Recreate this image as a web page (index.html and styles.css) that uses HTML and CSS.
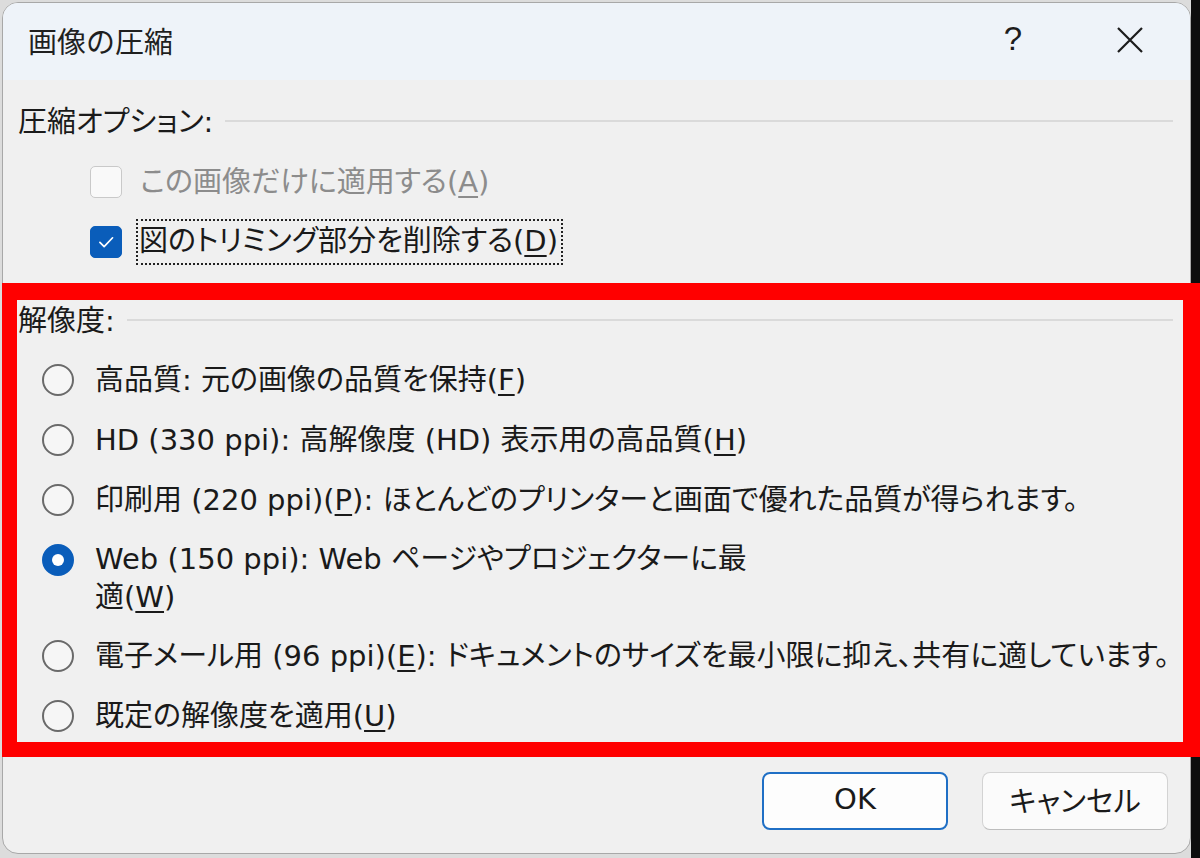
FILE: index.html
```html
<!DOCTYPE html>
<html lang="ja">
<head>
<meta charset="utf-8">
<title>画像の圧縮</title>
<link rel="stylesheet" href="styles.css">
</head>
<body>
<div class="window">
  <div class="titlebar">
    <div class="title">画像の圧縮</div>
    <div class="title-actions">
      <span class="help">?</span>
      <svg class="close" width="28" height="28" viewBox="0 0 28 28"><path d="M2 2 L26 26 M26 2 L2 26" stroke="#1c1c1c" stroke-width="2.2" fill="none"/></svg>
    </div>
  </div>
  <div class="content">
    <div class="group-head"><span>圧縮オプション:</span><i class="rule"></i></div>
    <div class="checks">
      <div class="check-row disabled">
        <span class="box"></span>
        <span class="label">この画像だけに適用する(<u>A</u>)</span>
      </div>
      <div class="check-row">
        <span class="box checked"><svg width="32" height="32" viewBox="0 0 32 32"><path d="M9.5 16.5 L14 21 L23 11.5" stroke="#fff" stroke-width="1.8" fill="none" stroke-linecap="round" stroke-linejoin="round"/></svg></span>
        <span class="label focus">図のトリミング部分を削除する(<u>D</u>)</span>
      </div>
    </div>
    <div class="group-head res-head"><span>解像度:</span><i class="rule"></i></div>
    <div class="radios">
      <div class="radio-row"><span class="radio"></span><span class="label">高品質: 元の画像の品質を保持(<u>F</u>)</span></div>
      <div class="radio-row"><span class="radio"></span><span class="label">HD (330 ppi): 高解像度 (HD) 表示用の高品質(<u>H</u>)</span></div>
      <div class="radio-row"><span class="radio"></span><span class="label">印刷用 (220 ppi)(<u>P</u>): ほとんどのプリンターと画面で優れた品質が得られます。</span></div>
      <div class="radio-row two-line"><span class="radio on"></span><span class="label">Web (150 ppi): Web ページやプロジェクターに最<br>適(<u>W</u>)</span></div>
      <div class="radio-row"><span class="radio"></span><span class="label">電子メール用 (96 ppi)(<u>E</u>): ドキュメントのサイズを最小限に抑え、共有に適しています。</span></div>
      <div class="radio-row"><span class="radio"></span><span class="label">既定の解像度を適用(<u>U</u>)</span></div>
    </div>
    <div class="buttons">
      <button class="btn primary">OK</button>
      <button class="btn">キャンセル</button>
    </div>
  </div>
</div>
<div class="highlight"></div>
</body>
</html>
```
FILE: styles.css
```css
html, body {
  margin: 0;
  padding: 0;
}
body {
  width: 1200px;
  height: 858px;
  overflow: hidden;
  position: relative;
  background: linear-gradient(to right, #dcdcdc 0, #dcdcdc 1191px, #0d0d0d 1191px);
  font-family: "DejaVu Sans", "Noto Sans CJK JP", sans-serif;
  color: #1a1a1a;
}
.window {
  margin: 2px 0 0 2px;
  width: 1187px;
  height: 850px;
  border: 1px solid #a8a8a8;
  border-radius: 16px;
  background: #f0f0f0;
  overflow: hidden;
  display: flex;
  flex-direction: column;
}
.titlebar {
  height: 77px;
  background: #eef3f9;
  display: flex;
  align-items: center;
  justify-content: space-between;
  padding: 0 46px 0 25px;
  flex: none;
}
.title {
  font-family: "Noto Sans CJK JP", sans-serif;
  font-size: 29px;
  line-height: 40px;
  color: #1f1f1f;
  padding-bottom: 4px;
}
.title-actions {
  display: flex;
  align-items: center;
  gap: 94px;
}
.help {
  font-size: 33px;
  line-height: 40px;
  font-family: "Liberation Sans", sans-serif;
  color: #1c1c1c;
  padding-bottom: 6px;
}
.close {
  display: block;
  margin-bottom: 4px;
}
.content {
  flex: 1;
  padding: 22px 17px 0 15px;
  display: flex;
  flex-direction: column;
  font-size: 29px;
  font-feature-settings: "palt";
  white-space: nowrap;
}
.group-head {
  display: flex;
  align-items: center;
  height: 40px;
  line-height: 40px;
}
.group-head .rule {
  flex: 1;
  height: 2px;
  background: #dadada;
  margin-left: 12px;
  margin-top: -2px;
}
.checks {
  margin-top: 20px;
  padding-left: 72px;
  display: flex;
  flex-direction: column;
  gap: 20px;
}
.check-row {
  display: flex;
  align-items: center;
  height: 40px;
  line-height: 40px;
}
.check-row .box {
  width: 30px;
  height: 30px;
  border: 1px solid #c9c9c9;
  border-radius: 5px;
  background: #f9f9f9;
  box-sizing: content-box;
  margin-right: 18px;
  flex: none;
}
.check-row .box.checked {
  background: #0a5dba;
  border-color: #0a5dba;
  display: flex;
  align-items: center;
  justify-content: center;
}
.check-row .box.checked svg {
  display: block;
}
.check-row.disabled .label {
  color: #8c8c8c;
}
.label u {
  text-decoration-thickness: 2px;
  text-underline-offset: 4px;
}
.label.focus {
  border: 2px dotted #222;
  padding: 0 3px 2px 1px;
  margin-left: -4px;
}
.res-head {
  margin-top: 39px;
}
.radios {
  margin-top: 19px;
  padding-left: 24px;
  display: flex;
  flex-direction: column;
  gap: 20px;
}
.radio-row {
  display: flex;
  align-items: flex-start;
  line-height: 40px;
}
.radio-row.two-line .label {
  line-height: 38px;
}
.radio {
  flex: none;
  width: 28px;
  height: 28px;
  border: 2px solid #6a6a6a;
  border-radius: 50%;
  margin: 4px 21px 0 0;
  background: #f6f6f6;
}
.radio.on {
  background: #0a5dba;
  border-color: #0a5dba;
  position: relative;
}
.radio.on::after {
  content: "";
  position: absolute;
  left: 8px;
  top: 8px;
  width: 12px;
  height: 12px;
  border-radius: 50%;
  background: #fff;
}
.buttons {
  margin-top: 36px;
  display: flex;
  justify-content: flex-end;
  gap: 34px;
  padding-right: 5px;
}
.btn {
  width: 186px;
  height: 58px;
  border: 1px solid #d3d3d3;
  border-bottom-color: #bdbdbd;
  border-radius: 8px;
  background: #fbfbfb;
  font-family: "DejaVu Sans", "Noto Sans CJK JP", sans-serif;
  font-size: 29px;
  font-feature-settings: "palt";
  color: #1a1a1a;
  padding: 0 0 4px 0;
}
.btn.primary {
  border: 2px solid #1f6fc5;
  background: #fdfdfd;
}
.highlight {
  position: absolute;
  left: 2px;
  top: 283px;
  width: 1198px;
  height: 474px;
  box-sizing: border-box;
  border-style: solid;
  border-color: #ff0000;
  border-width: 17px 17px 15px 15px;
  pointer-events: none;
}
```
